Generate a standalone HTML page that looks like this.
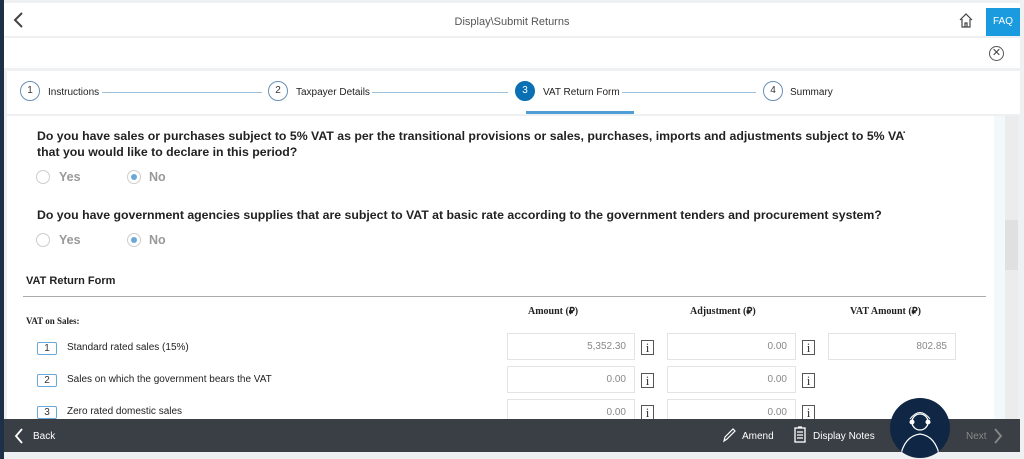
<!DOCTYPE html>
<html><head><style>
*{margin:0;padding:0;box-sizing:border-box}
body{width:1024px;height:459px;overflow:hidden;background:#eef0f2;font-family:"Liberation Sans",sans-serif;position:relative}
.abs{position:absolute}
.lstrip{left:0;top:0;width:4px;height:459px;background:#1d3048}
.hdr{left:4px;top:3px;width:1016px;height:33px;background:#fff}
.row2{left:4px;top:38px;width:1016px;height:30px;background:#fff}
.tabs{left:7px;top:71px;width:1013px;height:43px;background:#fff}
.content{left:7px;top:116px;width:987px;height:303px;background:#fff}
.sideband{left:994px;top:116px;width:11px;height:303px;background:#f3f8fb}
.sb{left:1005px;top:116px;width:13px;height:303px;background:#ececec}
.thumb{left:1005px;top:220px;width:13px;height:50px;background:#e0e0e0}
.circ{width:20px;height:20px;border-radius:50%;border:1px solid #6a8fb5;font-size:10px;color:#333;text-align:center;line-height:18px;background:#fff}
.lbl{font-size:10px;color:#222}
.line{height:1px;background:#9cc0da}
.q{font-size:12.3px;font-weight:bold;color:#222;line-height:16px}
.radio{width:14px;height:14px;border-radius:50%;border:1px solid #ccc;background:#fff}
.rtxt{font-size:12.5px;font-weight:bold;color:#999}
.ser{font-family:"Liberation Serif",serif;font-weight:bold;font-size:10px;color:#222}
.inp{height:27px;border:1px solid #e3e3e3;background:#fff;font-size:10px;color:#888;text-align:right;padding-right:8px;line-height:26px}
.info{width:13px;height:15px;border:1px solid #555;font-family:"Liberation Serif",serif;font-size:13px;line-height:13px;text-align:center;color:#333}
.num{width:20px;height:13px;border:1px solid #6aa8d8;font-size:10px;text-align:center;line-height:11px;color:#333;border-radius:2px}
.rl{font-size:10px;color:#222}
.foot{left:4px;top:419px;width:1016px;height:33px;background:#3a3f45}
.ft{font-size:10px;color:#fff}
</style></head><body>
<div class="abs lstrip"></div>
<div class="abs hdr"></div>
<svg class="abs" style="left:12px;top:12px" width="12" height="16"><path d="M10 1 L3 8 L10 15" stroke="#444" stroke-width="2" fill="none"/></svg>
<div class="abs" style="left:0;width:1024px;top:16px;text-align:center;font-size:11px;color:#555">Display\Submit Returns</div>
<svg class="abs" style="left:958px;top:12px" width="16" height="16"><path d="M2 8 L8 2 L14 8 M4 7 V15 H12 V7 M7 15 V11 H9 V15" stroke="#444" stroke-width="1.2" fill="none"/></svg>
<div class="abs" style="left:986px;top:8px;width:34px;height:28px;background:#1a9be0;color:#fff;font-size:10px;text-align:center;line-height:28px">FAQ</div>
<div class="abs row2"></div>
<div class="abs" style="left:989px;top:46px;width:15px;height:15px;border:1px solid #555;border-radius:50%;font-size:11px;text-align:center;line-height:13px;color:#444">&#x2715;</div>
<div class="abs tabs"></div>
<div class="abs circ" style="left:20px;top:81px">1</div><div class="abs lbl" style="left:48px;top:87px">Instructions</div>
<div class="abs line" style="left:102px;top:92px;width:160px"></div>
<div class="abs circ" style="left:268px;top:81px">2</div><div class="abs lbl" style="left:296px;top:87px">Taxpayer Details</div>
<div class="abs line" style="left:372px;top:92px;width:136px"></div>
<div class="abs circ" style="left:515px;top:81px;background:#0a6fb3;border-color:#0a6fb3;color:#fff">3</div><div class="abs lbl" style="left:543px;top:87px">VAT Return Form</div>
<div class="abs" style="left:526px;top:111px;width:108px;height:3px;background:#4f9fd6"></div>
<div class="abs line" style="left:622px;top:92px;width:134px"></div>
<div class="abs circ" style="left:763px;top:81px">4</div><div class="abs lbl" style="left:790px;top:87px">Summary</div>
<div class="abs content"></div>
<div class="abs sideband"></div><div class="abs sb"></div><div class="abs thumb"></div>
<div class="abs q" style="left:37px;top:128px;width:868px;white-space:nowrap;overflow:hidden">Do you have sales or purchases subject to 5% VAT as per the transitional provisions or sales, purchases, imports and adjustments subject to 5% VAT</div>
<div class="abs q" style="left:37px;top:144px">that you would like to declare in this period?</div>
<div class="abs radio" style="left:36px;top:170px"></div><div class="abs rtxt" style="left:59px;top:170px">Yes</div>
<div class="abs radio" style="left:127px;top:170px"><div style="width:6px;height:6px;border-radius:50%;background:#69a9d8;margin:3px"></div></div><div class="abs rtxt" style="left:149px;top:170px">No</div>
<div class="abs q" style="left:37px;top:207px">Do you have government agencies supplies that are subject to VAT at basic rate according to the government tenders and procurement system?</div>
<div class="abs radio" style="left:36px;top:233px"></div><div class="abs rtxt" style="left:59px;top:233px">Yes</div>
<div class="abs radio" style="left:127px;top:233px"><div style="width:6px;height:6px;border-radius:50%;background:#69a9d8;margin:3px"></div></div><div class="abs rtxt" style="left:149px;top:233px">No</div>
<div class="abs" style="left:26px;top:275px;font-size:11px;font-weight:bold;color:#222">VAT Return Form</div>
<div class="abs" style="left:23px;top:296px;width:963px;height:1px;background:#aaa"></div>
<div class="abs ser" style="left:528px;top:304px">Amount (&#x20C1;)</div>
<div class="abs ser" style="left:690px;top:304px">Adjustment (&#x20C1;)</div>
<div class="abs ser" style="left:850px;top:304px">VAT Amount (&#x20C1;)</div>
<div class="abs ser" style="left:26px;top:316px;font-size:9px">VAT on Sales:</div>
<div class="abs num" style="left:37px;top:342px">1</div><div class="abs rl" style="left:67px;top:342px">Standard rated sales (15%)</div>
<div class="abs inp" style="left:507px;top:333px;width:128px">5,352.30</div><div class="abs info" style="left:641px;top:340px">i</div>
<div class="abs inp" style="left:667px;top:333px;width:129px">0.00</div><div class="abs info" style="left:802px;top:340px">i</div>
<div class="abs inp" style="left:828px;top:333px;width:128px">802.85</div>
<div class="abs num" style="left:37px;top:374px">2</div><div class="abs rl" style="left:67px;top:374px">Sales on which the government bears the VAT</div>
<div class="abs inp" style="left:507px;top:366px;width:128px">0.00</div><div class="abs info" style="left:641px;top:373px">i</div>
<div class="abs inp" style="left:667px;top:366px;width:129px">0.00</div><div class="abs info" style="left:802px;top:373px">i</div>
<div class="abs num" style="left:37px;top:406px">3</div><div class="abs rl" style="left:67px;top:406px">Zero rated domestic sales</div>
<div class="abs inp" style="left:507px;top:399px;width:128px">0.00</div><div class="abs info" style="left:641px;top:405px">i</div>
<div class="abs inp" style="left:667px;top:399px;width:129px">0.00</div><div class="abs info" style="left:802px;top:405px">i</div>
<div class="abs foot"></div>
<svg class="abs" style="left:14px;top:428px" width="10" height="16"><path d="M8 1 L2 8 L8 15" stroke="#fff" stroke-width="1.8" fill="none"/></svg>
<div class="abs ft" style="left:33px;top:431px">Back</div>
<svg class="abs" style="left:722px;top:427px" width="14" height="16"><path d="M2 14 L3 10 L11 2 L13 4 L5 12 Z" stroke="#fff" stroke-width="1.2" fill="none"/></svg>
<div class="abs ft" style="left:742px;top:431px">Amend</div>
<svg class="abs" style="left:794px;top:426px" width="12" height="17"><rect x="1" y="2" width="10" height="14" stroke="#fff" stroke-width="1.3" fill="none"/><path d="M4 1 H8 M3 6 H9 M3 9 H9 M3 12 H9" stroke="#fff" stroke-width="1.2"/></svg>
<div class="abs ft" style="left:813px;top:431px">Display Notes</div>
<div class="abs" style="left:890px;top:398px;width:60px;height:60px;border-radius:50%;background:#0f2744;overflow:hidden">
<svg width="60" height="60"><circle cx="30" cy="24" r="8" stroke="#fff" stroke-width="1.3" fill="none"/><circle cx="22" cy="24" r="2.5" fill="#fff"/><circle cx="38" cy="24" r="2.5" fill="#fff"/><path d="M20 21 Q30 8 40 21" stroke="#fff" fill="none"/><path d="M10 60 Q14 38 30 36 Q46 38 50 60" stroke="#fff" stroke-width="1.2" fill="none"/></svg></div>
<div class="abs ft" style="left:966px;top:431px;color:#888">Next</div>
<svg class="abs" style="left:993px;top:428px" width="10" height="16"><path d="M2 1 L8 8 L2 15" stroke="#888" stroke-width="1.8" fill="none"/></svg>
</body></html>
